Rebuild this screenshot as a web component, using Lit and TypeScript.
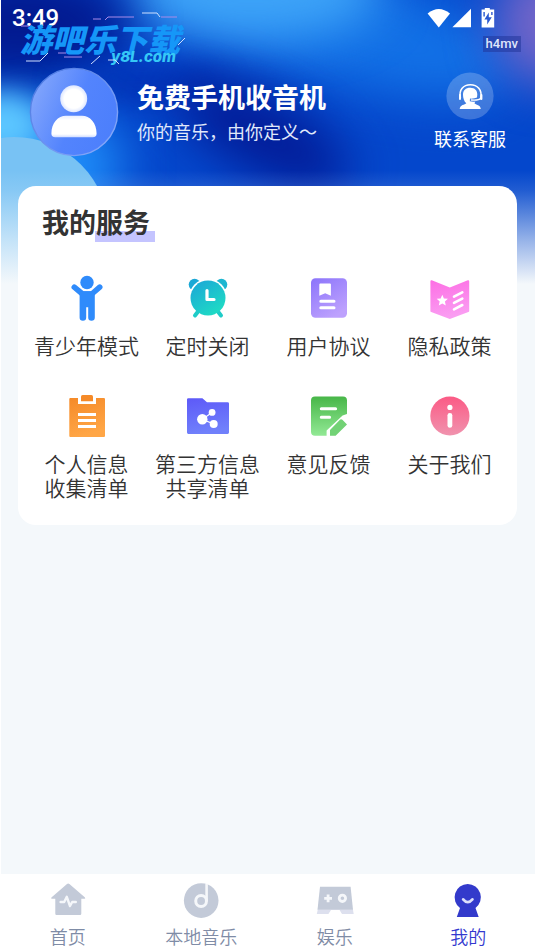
import { LitElement, html, svg, css } from "lit";
import type { TemplateResult, SVGTemplateResult } from "lit";
import { customElement, property } from "lit/decorators.js";

interface Service {
  lines: string[];
  icon: SVGTemplateResult;
}

interface Tab {
  label: string;
  active?: boolean;
  icon: SVGTemplateResult;
}

const gradient = (id: string, from: string, to: string, slant = 0.3) => svg`
  <linearGradient id=${id} x1="0" y1="0" x2=${slant} y2="1">
    <stop offset="0" stop-color=${from} />
    <stop offset="1" stop-color=${to} />
  </linearGradient>`;

const services: Service[] = [
  {
    lines: ["青少年模式"],
    icon: svg`
      <g fill="#2f8bfb">
        <circle cx="24" cy="8.5" r="6.7" />
        <path d="M11.3 13.2 19.5 20H28.8L36.7 13.2" fill="none" stroke="#2f8bfb" stroke-width="5.6" stroke-linecap="round" stroke-linejoin="round" />
        <path d="M16.6 17.3H31.8V43.4a3.3 3.3 0 0 1-6.6 0V33.3h-2v10.1a3.3 3.3 0 0 1-6.6 0Z" />
      </g>`,
  },
  {
    lines: ["定时关闭"],
    icon: svg`
      <defs>${gradient("g-clock", "#1ba4d8", "#1fdcc4", 0.7)}</defs>
      <circle cx="10.6" cy="10.6" r="5.9" fill="#1ba8d6" />
      <circle cx="37.4" cy="10.6" r="5.9" fill="#1db6d0" />
      <circle cx="24" cy="24" r="19.2" fill="#fff" />
      <path d="M14.5 37 11 41.5M33.5 37 37 41.5" stroke="#1fccc8" stroke-width="4" stroke-linecap="round" />
      <circle cx="24" cy="24" r="17.5" fill="url(#g-clock)" />
      <path d="M23 16.5V25.5H30" fill="none" stroke="#fff" stroke-width="3.2" stroke-linecap="round" stroke-linejoin="round" />`,
  },
  {
    lines: ["用户协议"],
    icon: svg`
      <defs>${gradient("g-doc", "#8b74fb", "#bda1fd", 0.6)}</defs>
      <rect x="6" y="4.3" width="36" height="39.5" rx="4.5" fill="url(#g-doc)" />
      <path d="M15.3 9.4h9.6a1 1 0 0 1 1 1v11.4l-5.7-2.6-5.9 2.6V10.4a1 1 0 0 1 1-1Z" fill="#fff" />
      <path d="M15.8 27.3H29M15.8 33.7H29" stroke="#fff" stroke-width="3" stroke-linecap="round" />`,
  },
  {
    lines: ["隐私政策"],
    icon: svg`
      <defs>${gradient("g-privacy", "#fd6ee4", "#fa9df2", 0.2)}</defs>
      <path d="M5.8 6.2 23.8 13.4 41.8 6.2q1.4-.3 1.4 1.2V37q0 .8-.8 1.1L23.8 45 5.2 38.1q-.8-.3-.8-1.1V7.4q0-1.5 1.4-1.2Z" fill="url(#g-privacy)" />
      <path d="m16.3 20.7 1.6 3.7 4 .4-3 2.7.9 4-3.5-2.1-3.5 2.1.9-4-3-2.7 4-.4Z" fill="#fff" />
      <path d="M28 22.6 36.3 18.3M28 28.9 36.3 24.6M28 35.3 36.3 31" stroke="#fff" stroke-width="2.6" stroke-linecap="round" />`,
  },
  {
    lines: ["个人信息", "收集清单"],
    icon: svg`
      <defs>${gradient("g-clip", "#f58a28", "#ffa646")}</defs>
      <path d="M7.3 6H15v6h18V6h7.9q1.1 0 1.1 1.1V43.9q0 1.1-1.1 1.1H7.4q-1.1 0-1.1-1.1V7.1Q6.3 6 7.3 6Z" fill="url(#g-clip)" />
      <path d="M18 4.6Q18 3 19.6 3h8.8Q30 3 30 4.6V9.2H18Z" fill="#f58a28" />
      <path d="M15 22.4H33M15 28.4H33M15 34.4H33" stroke="#fff" stroke-width="3" />`,
  },
  {
    lines: ["第三方信息", "共享清单"],
    icon: svg`
      <defs>${gradient("g-folder", "#5d59f8", "#7080fb", 0.2)}</defs>
      <path d="M4.4 6.2H18.4L23 10.2H43.6q1.4 0 1.4 1.4V40.6q0 1.4-1.4 1.4H4.4Q3 42 3 40.6V7.6q0-1.4 1.4-1.4Z" fill="url(#g-folder)" />
      <path d="M28 20.4 18.4 27.3 29.7 32" fill="none" stroke="#fff" stroke-width="1.2" />
      <g fill="#fff"><circle cx="18.3" cy="27.3" r="5.2" /><circle cx="28.1" cy="20.4" r="3.4" /><circle cx="29.7" cy="32" r="4" /></g>`,
  },
  {
    lines: ["意见反馈"],
    icon: svg`
      <defs>${gradient("g-feedback", "#47b648", "#92e995", 0)}</defs>
      <path d="M10 4.4H38q4 0 4 4V22L37.6 23.4 21.6 38.4V43.8H10q-4 0-4-4V8.4q0-4 4-4Z" fill="url(#g-feedback)" />
      <path d="M35.2 27.6q1.2-.8 2.2.2L42 32.4 30.6 43.8H25V38Z" fill="#72d275" />
      <path d="M16.3 16.8H30.6M16.3 25.3H24.6" stroke="#fff" stroke-width="3" stroke-linecap="round" />`,
  },
  {
    lines: ["关于我们"],
    icon: svg`
      <defs>${gradient("g-about", "#fb5a85", "#f093ae", 0)}</defs>
      <circle cx="23.9" cy="24" r="19.6" fill="url(#g-about)" />
      <circle cx="23.9" cy="15.4" r="2.6" fill="#fff" />
      <path d="M23.9 23.3V33.4" stroke="#fff" stroke-width="4.8" stroke-linecap="round" />`,
  },
];

const tabs: Tab[] = [
  {
    label: "首页",
    icon: svg`
      <path d="M19 3.9q1.2-1 2.4 0L37 17.4q.8 1.2-.6 1.4H33.3V33.8q0 1.2-1.2 1.2H8.5q-1.2 0-1.2-1.2V18.8H4q-1.4-.2-.6-1.4Z" fill="#c3cad8" />
      <path d="M12.6 22H16.2L18.8 16.8 22 26 24.2 22H27.8" fill="none" stroke="#f5f7fa" stroke-width="2.4" stroke-linecap="round" stroke-linejoin="round" />`,
  },
  {
    label: "本地音乐",
    icon: svg`
      <circle cx="20.2" cy="20.6" r="17.3" fill="#c3cad8" />
      <circle cx="20.1" cy="21" r="5.4" fill="none" stroke="#f5f7fa" stroke-width="3" />
      <path d="M25.6 3.8V21" stroke="#f5f7fa" stroke-width="2.6" />`,
  },
  {
    label: "娱乐",
    icon: svg`
      <path d="M2.8 29.5H37.9L38.7 34H27L24.6 30H16L13.4 34H1.8Z" fill="#dde0ee" />
      <path d="M5 6.8H35.6L38 29.8H2.5Z" fill="#c3cad8" />
      <path d="M13.1 14.4V22.2M9.2 18.3H17" stroke="#f5f7fa" stroke-width="2.8" />
      <circle cx="27.4" cy="18.3" r="3.2" fill="none" stroke="#f5f7fa" stroke-width="2.8" />`,
  },
  {
    label: "我的",
    active: true,
    icon: svg`
      <path d="M19.7 4a13.3 13.3 0 0 1 7.8 24L30.7 37H8.8L12 28A13.3 13.3 0 0 1 19.7 4Z" fill="#333acb" />
      <path d="M15.2 19.4q4.5 5.6 9.2 0" fill="none" stroke="#dcdffa" stroke-width="2.8" stroke-linecap="round" />`,
  },
];

const fontStack = css`"Noto Sans CJK SC", "Noto Sans", sans-serif`;

@customElement("service-item")
class ServiceItem extends LitElement {
  @property({ attribute: false }) service!: Service;

  static styles = css`
    :host { display: block; }
    .item {
      display: flex;
      flex-direction: column;
      align-items: center;
      gap: 11px;
      width: 100%;
      padding: 0;
      border: 0;
      background: none;
      color: #333;
      font: 350 21px/24px ${fontStack};
      cursor: pointer;
    }
    .icon { width: 48px; height: 48px; }
    .line { display: block; white-space: nowrap; }
  `;

  render(): TemplateResult {
    return html`
      <button class="item" type="button">
        <svg class="icon" viewBox="0 0 48 48" aria-hidden="true">${this.service.icon}</svg>
        <span>${this.service.lines.map((l) => html`<span class="line">${l}</span>`)}</span>
      </button>`;
  }
}

@customElement("site-logo")
class SiteLogo extends LitElement {
  static styles = css`
    :host {
      display: flex;
      flex-direction: column;
      position: absolute;
      left: 19px;
      top: 12px;
      width: 168px;
      padding-top: 10px;
      box-sizing: border-box;
      color: #1597f8;
    }
    .sparks { position: absolute; left: 0; top: 0; width: 168px; height: 52px; }
    .name {
      font: italic 900 32px/32px ${fontStack};
      white-space: nowrap;
    }
    .domain {
      align-self: flex-end;
      padding-right: 12px;
      margin-top: -5px;
      font: italic 800 15px/16px Inter, "Liberation Sans", sans-serif;
      color: #35c8f6;
    }
  `;

  render(): TemplateResult {
    return html`
      <svg class="sparks" viewBox="0 0 168 52" fill="none" aria-hidden="true">
        <path d="M122 1H137L140 5M6 49H20L28 41M71 52 80 44M88 48H95L99 52M165 26 158 33" stroke="#cfe0ff" />
        <path d="M85 8 88 5H114M141 5H157M73 7H81M44 45H62M38 41H46M1 14H9" stroke="#a98be8" />
      </svg>
      <span class="name">游吧乐下载</span>
      <span class="domain">y8L.com</span>`;
  }
}

@customElement("app-root")
class AppRoot extends LitElement {
  static styles = css`
    :host {
      display: block;
      font-family: ${fontStack};
      color: #333;
    }
    .page {
      position: relative;
      isolation: isolate;
      display: flex;
      flex-direction: column;
      box-sizing: border-box;
      min-height: 100vh;
      border-left: 1px solid #fff;
      background: #f4f8fb;
    }
    .wallpaper {
      position: absolute;
      z-index: -1;
      left: 0;
      top: 0;
      width: 100%;
      height: 284px;
    }
    .status {
      display: flex;
      align-items: center;
      justify-content: space-between;
      height: 36px;
      padding: 0 40px 0 11px;
      color: #fff;
    }
    .time { font: 500 24px/36px Roboto, sans-serif; }
    .indicators { width: 68px; height: 20px; }
    .tag {
      align-self: flex-end;
      margin-right: 14px;
      padding: 0 3px;
      background: rgba(30, 50, 150, 0.5);
      color: #dfe6fb;
      font: 500 13px/16px Roboto, sans-serif;
    }
    .profile {
      display: flex;
      align-items: flex-start;
      padding: 15px 24px 29px 28px;
      color: #fff;
    }
    .avatar { flex: none; width: 90px; height: 90px; }
    .who { flex: 1; padding: 10px 0 0 18px; }
    .title { margin: 0; font-size: 27px; font-weight: 700; line-height: 40px; }
    .motto { margin: 0; font-size: 18px; line-height: 28px; color: #e0e9fb; }
    .contact {
      display: flex;
      flex-direction: column;
      align-items: center;
      gap: 6px;
      margin-top: 5px;
      padding: 0 5px;
      border: 0;
      background: none;
      color: #fff;
      font: 400 18px/24px ${fontStack};
    }
    .headset { width: 48px; height: 48px; }
    .card {
      margin: 0 18px 0 17px;
      padding: 16px 7px 26px 8px;
      border-radius: 18px;
      background: #fff;
    }
    .heading {
      display: inline-block;
      margin: 0 0 32px 16px;
      padding-right: 5px;
      font-size: 27px;
      font-weight: 700;
      line-height: 40px;
      background: linear-gradient(#c4c4ff, #c4c4ff) right bottom / 60px 11px no-repeat;
    }
    .grid {
      display: grid;
      grid-template-columns: repeat(4, 1fr);
      row-gap: 35px;
    }
    .tabs {
      display: grid;
      grid-template-columns: repeat(4, 1fr);
      margin-top: auto;
      padding: 6px 0 2px;
      background: #fff;
    }
    .tab {
      display: flex;
      flex-direction: column;
      align-items: center;
      gap: 3px;
      color: #7f8ca6;
      font-size: 18px;
      font-weight: 350;
      line-height: 26px;
      text-decoration: none;
    }
    .tab.active { color: #3339cf; }
    .tab-icon { width: 40px; height: 40px; }
  `;

  render(): TemplateResult {
    return html`
      <div class="page">
        <svg class="wallpaper" viewBox="0 0 534 284" preserveAspectRatio="none" aria-hidden="true">
          <defs>
            <filter id="soft" x="-100%" y="-150%" width="300%" height="400%" color-interpolation-filters="sRGB"><feGaussianBlur stdDeviation="24" /></filter>
            <filter id="soft-s" x="-100%" y="-150%" width="300%" height="400%" color-interpolation-filters="sRGB"><feGaussianBlur stdDeviation="14" /></filter>
            <linearGradient id="fade" x1="0" y1="0" x2="0" y2="1">
              <stop offset=".6" stop-color="#f4f8fb" stop-opacity="0" />
              <stop offset=".67" stop-color="#f4f8fb" stop-opacity=".12" />
              <stop offset=".85" stop-color="#f4f8fb" stop-opacity=".62" />
              <stop offset="1" stop-color="#f4f8fb" />
            </linearGradient>
          </defs>
          <rect width="534" height="284" fill="#0447cc" />
          <ellipse cx="340" cy="26" rx="180" ry="56" fill="#1270e6" filter="url(#soft)" transform="rotate(16 340 26)" />
          <ellipse cx="250" cy="-10" rx="130" ry="50" fill="#3ea4f8" filter="url(#soft)" />
          <ellipse cx="20" cy="24" rx="110" ry="54" fill="#021a90" filter="url(#soft)" />
          <ellipse cx="140" cy="85" rx="80" ry="20" fill="#0334b8" filter="url(#soft-s)" />
          <ellipse cx="262" cy="135" rx="96" ry="38" fill="#021c98" filter="url(#soft)" transform="rotate(28 262 135)" />
          <ellipse cx="50" cy="165" rx="72" ry="56" fill="#1f8cf8" filter="url(#soft)" />
          <ellipse cx="0" cy="125" rx="44" ry="34" fill="#5cc6ff" filter="url(#soft-s)" />
          <ellipse cx="550" cy="22" rx="56" ry="62" fill="#7466c8" filter="url(#soft)" />
          <circle cx="13" cy="232" r="95" fill="#78c2f4" />
          <rect width="534" height="284" fill="url(#fade)" />
        </svg>

        <div class="status">
          <span class="time">3:49</span>
          <svg class="indicators" viewBox="0 0 68 20" fill="#fff" aria-hidden="true">
            <path d="M.6 5.6Q11.8-3.4 23 5.6L11.8 19.4Z" />
            <path d="M44 .8V19.3H25.4Z" />
            <path fill-rule="evenodd" d="M57.8 0h5V1.6H67.2V19.4H54.6V1.6H57.8ZM61.8 4.6 57.4 11.6H60.2V16.4L64.8 9.2H61.8ZM56.4 4V8.4H57.8V4ZM64.2 4V7H65.6V4Z" />
          </svg>
        </div>
        <span class="tag">h4mv</span>

        <header class="profile">
          <svg class="avatar" viewBox="0 0 90 90" aria-hidden="true">
            <defs>
              <linearGradient id="ball" x1="0" y1=".2" x2="1" y2=".6">
                <stop offset="0" stop-color="#86a8fc" />
                <stop offset=".55" stop-color="#5384fd" />
                <stop offset="1" stop-color="#4c7ffc" />
              </linearGradient>
              <linearGradient id="rim" x1="0" y1="0" x2="1" y2="1">
                <stop offset="0" stop-color="#4775e0" />
                <stop offset="1" stop-color="#8eaefc" />
              </linearGradient>
              <radialGradient id="face">
                <stop offset=".7" stop-color="#fff" />
                <stop offset="1" stop-color="#dde6ff" />
              </radialGradient>
              <linearGradient id="bust" x1="0" y1="0" x2="0" y2="1">
                <stop offset="0" stop-color="#e9efff" />
                <stop offset=".2" stop-color="#fff" />
                <stop offset=".85" stop-color="#fff" />
                <stop offset="1" stop-color="#cfdcff" />
              </linearGradient>
            </defs>
            <circle cx="45" cy="45" r="43.6" fill="url(#ball)" stroke="url(#rim)" stroke-width="1.4" />
            <circle cx="44.7" cy="31.8" r="13.5" fill="url(#face)" />
            <path d="M37 48.8H53C61 48.8 67.6 56 67.6 66.5q0 3.8-3.8 3.8H26.2q-3.8 0-3.8-3.8C22.4 56 29 48.8 37 48.8Z" fill="url(#bust)" />
          </svg>
          <div class="who">
            <h1 class="title">免费手机收音机</h1>
            <p class="motto">你的音乐，由你定义～</p>
          </div>
          <button class="contact" type="button">
            <svg class="headset" viewBox="0 0 48 48" aria-hidden="true">
              <circle cx="24" cy="24" r="23.6" fill="#fff" fill-opacity=".22" />
              <path d="M14.4 26C12.6 17.6 17.5 12.7 24.4 12.7S36.4 17.6 34.8 26" fill="none" stroke="#fff" stroke-width="1.6" />
              <path d="M14 23V27M35.4 23V27" stroke="#fff" stroke-width="2" stroke-linecap="round" />
              <path d="M24.3 15.8c4.6 0 7 2.8 7 6.6l-.3 3.2q-2.6 1.2-7 1l-.2 2.6q3 .8 5.6.2l-1 1.8c1.4 1.8 6.2 1.4 6.4 5.9H13.7c.2-4.6 5.2-4.2 6.6-5.9-2.2-1.8-3.3-5.1-3.3-8.5 0-4.2 2.6-6.9 7.3-6.9Z" fill="#fff" />
              <path d="M35.2 26.2Q32.6 28.6 25.4 28" fill="none" stroke="#fff" stroke-width="1.3" stroke-linecap="round" />
            </svg>
            <span>联系客服</span>
          </button>
        </header>

        <main class="card">
          <h2 class="heading">我的服务</h2>
          <div class="grid">
            ${services.map((s) => html`<service-item .service=${s}></service-item>`)}
          </div>
        </main>

        <nav class="tabs">
          ${tabs.map(
            (t) => html`
              <a class="tab ${t.active ? "active" : ""}" href="#">
                <svg class="tab-icon" viewBox="0 0 40 40" aria-hidden="true">${t.icon}</svg>
                <span>${t.label}</span>
              </a>`,
          )}
        </nav>
        <site-logo></site-logo>
      </div>`;
  }
}
